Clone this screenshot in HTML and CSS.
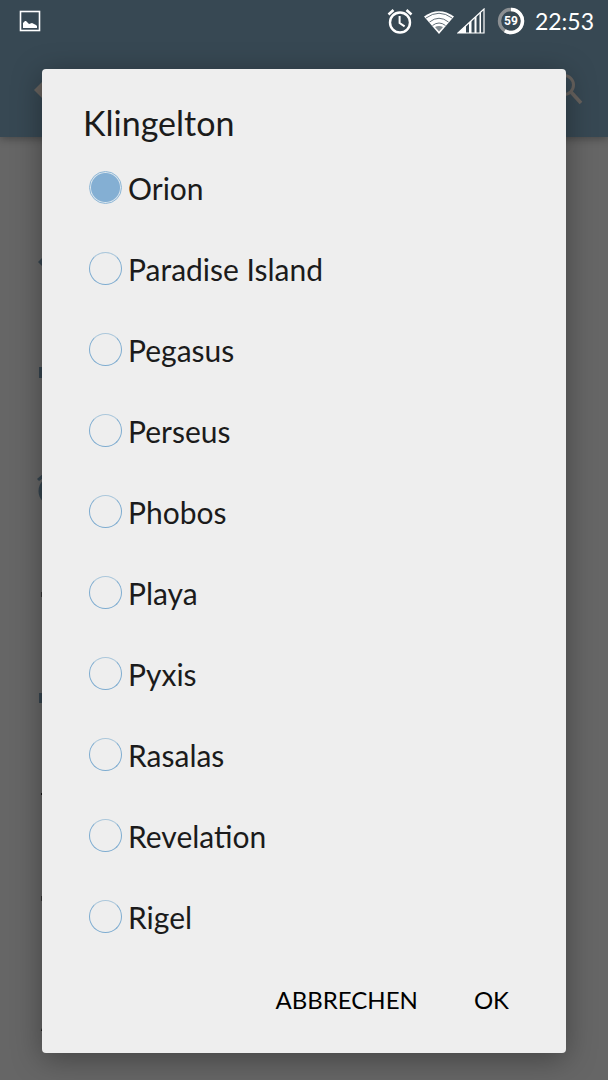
FILE: index.html
```
<!DOCTYPE html>
<html lang="de">
<head>
    <meta charset="UTF-8">
    <meta name="viewport" content="width=device-width, initial-scale=1.0">
    <title>Klingelton</title>
    <link rel="stylesheet" href="styles.css">
</head>
<body>

    <!-- Statusleiste -->
    <header class="top">
        <div class="status-bar">
            <svg class="picture" width="22" height="22" viewBox="0 0 22 22">
                <rect x="1.5" y="1.5" width="19" height="19" fill="none" stroke="#fff" stroke-width="1.6"/>
                <path d="M4 18v-5l2-2h1l2 2 1 1 3-1 2 1 2 1 1 1v2z" fill="#fff"/>
            </svg>
            <div class="status-icons">
                <svg width="26" height="28" viewBox="0 0 26 28" fill="none" stroke="#fff">
                    <circle cx="13" cy="15.5" r="10" stroke-width="2.4"/>
                    <path d="M12.6 9v7l5 3.3" stroke-width="2"/>
                    <path d="M1.5 7.5l5-4.5M24.5 7.5l-5-4.5" stroke-width="2.6"/>
                </svg>
                <svg class="wifi" width="32" height="28" viewBox="0 0 32 28">
                    <path d="M1 9.5Q16-1 31 9.5L16 27z" fill="#fff"/>
                    <path d="M3 11Q16 1.5 29 11M6.500 15Q16 7.500 25.500 15M9.500 18.500Q16 13.500 22.500 18.500" fill="none" stroke="#374853" stroke-width="0.8"/>
                    <path d="M12 20q4-2 8 0l-4 4.500z" fill="#808a90"/>
                </svg>
                <svg class="signal" width="28" height="26" viewBox="0 0 28 26">
                    <path d="M1 25L27 1v24z" fill="#374853" stroke="#fff" stroke-width="1.2"/>
                    <path d="M1 25L9 17.600V25zM12 25V15l2.500-2.300V25zM17.500 25V10l2-1.800V25zM22.500 25V5.500l1.500-1.500v21z" fill="#fff"/>
                </svg>
                <svg class="battery" width="28" height="28" viewBox="0 0 28 28">
                    <circle cx="14" cy="14" r="11.5" fill="none" stroke="#8b8f92" stroke-width="3.4"/>
                    <path d="M14 2.500A11.500 11.500 0 1 1 7.800 23.700" fill="none" stroke="#fff" stroke-width="3.4"/>
                    <text x="14" y="18" text-anchor="middle">59</text>
                </svg>
                <span class="clock">22:53</span>
            </div>
        </div>
        <div class="app-bar">
            <svg width="24" height="24" viewBox="0 0 24 24"><path d="M0 12L11 1v22z" fill="#67625e"/></svg>
            <svg width="32" height="32" viewBox="0 0 32 32" fill="none" stroke="#67625e">
                <circle cx="12" cy="11" r="9.5" stroke-width="3"/>
                <path d="M19 18l10 11" stroke-width="3.6"/>
            </svg>
        </div>
    </header>

    <!-- Einstellungen im Hintergrund -->
    <main class="settings">
        <svg width="30" height="920" viewBox="0 0 30 920" fill="#35444e">
            <path d="M1 125l7-7v14z"/>
            <path d="M2 230h20v11H2z"/>
            <path d="M0 342l7-6 2 3-7 5z"/>
            <circle cx="16" cy="354" r="12.5" fill="none" stroke="#35444e" stroke-width="4"/>
            <path d="M2 556h20v10H2z"/>
            <path d="M4 455h1v5H4zM4 759h1v5H4z" fill="#333"/>
            <path d="M4 656h1v2H4zM4 894l1-3v3z" fill="#111"/>
        </svg>
    </main>

    <!-- Dialog -->
    <form class="dialog" role="dialog" aria-labelledby="dialogTitle">
        <h1 id="dialogTitle">Klingelton</h1>
        <div class="options">
            <label class="option"><input type="radio" name="tone" checked>Orion</label>
            <label class="option"><input type="radio" name="tone">Paradise Island</label>
            <label class="option"><input type="radio" name="tone">Pegasus</label>
            <label class="option"><input type="radio" name="tone">Perseus</label>
            <label class="option"><input type="radio" name="tone">Phobos</label>
            <label class="option"><input type="radio" name="tone">Playa</label>
            <label class="option"><input type="radio" name="tone">Pyxis</label>
            <label class="option"><input type="radio" name="tone">Rasalas</label>
            <label class="option"><input type="radio" name="tone">Revelation</label>
            <label class="option"><input type="radio" name="tone">Rigel</label>
        </div>
        <div class="buttons">
            <button type="button">ABBRECHEN</button>
            <button type="button">OK</button>
        </div>
    </form>

</body>
</html>
```
FILE: styles.css
```
body {
    margin: 0;
    position: relative;
    min-height: 100vh;
    font-family: Lato, sans-serif;
    background-color: #666;
    color: #1b1b1b;
    overflow-x: hidden;
}
svg {
    display: block;
}
.top {
    background-color: #374853;
    box-shadow: 0 2px 8px rgba(0, 0, 0, 0.3);
}
.status-bar {
    display: flex;
    justify-content: space-between;
    align-items: center;
    height: 42px;
    padding: 0 14px 0 19px;
}
.status-icons {
    display: flex;
    align-items: center;
    color: #fff;
}
.wifi {
    margin-left: 10px;
}
.signal {
    margin-left: 2px;
}
.battery {
    margin-left: 12px;
}
.battery text {
    font-family: Roboto, sans-serif;
    font-size: 12px;
    font-weight: bold;
    fill: #fff;
}
.clock {
    margin-left: 10px;
    font-size: 23px;
}
.app-bar {
    display: flex;
    justify-content: space-between;
    align-items: center;
    height: 95px;
    padding: 0 24px 0 34px;
}
.settings {
    padding-left: 37px;
}
.dialog {
    position: absolute;
    top: 69px;
    left: 42px;
    right: 42px;
    padding: 34px 41px 30px;
    background-color: #eee;
    border-radius: 4px;
    box-shadow: 0 6px 30px rgba(0, 0, 0, 0.35);
}
h1 {
    margin: 0 0 4px;
    font-size: 34px;
    font-weight: normal;
    line-height: 40px;
}
.option {
    display: flex;
    align-items: center;
    gap: 6px;
    height: 81px;
    padding-left: 6px;
    font-size: 30px;
}
.options {
    margin-bottom: 18px;
}
.option input {
    appearance: none;
    flex: none;
    width: 33px;
    height: 33px;
    margin: 0;
    border: 1px solid #7eacd0;
    border-top-color: #abc7db;
    border-radius: 50%;
}
.option input:checked {
    border-color: #8fb7d6;
    background: radial-gradient(circle, #84afd3 14px, #dce7ef 15px);
}
.buttons {
    display: flex;
    justify-content: flex-end;
    gap: 24px;
}
.buttons button {
    height: 48px;
    padding: 0 16px;
    border: none;
    background: none;
    font-family: inherit;
    font-size: 24px;
    color: #000;
}
```
